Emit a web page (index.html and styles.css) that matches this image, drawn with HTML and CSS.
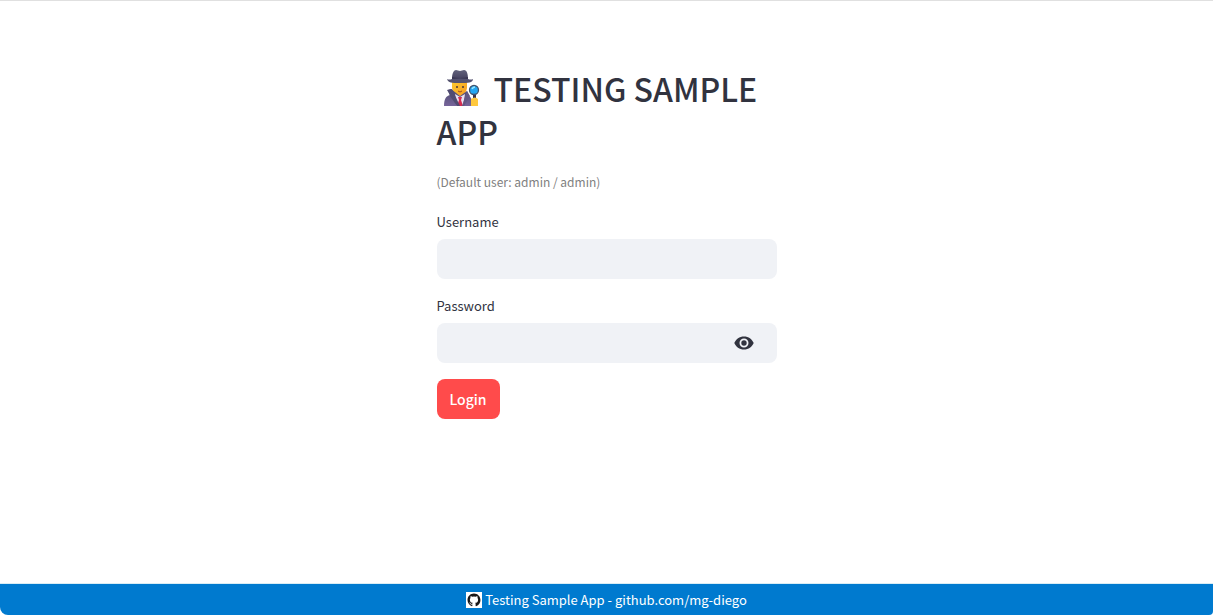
FILE: index.html
```
<!DOCTYPE html>
<html lang="en">
<head>
<meta charset="utf-8">
<meta name="viewport" content="width=device-width, initial-scale=1">
<title>Testing Sample App</title>
<link rel="stylesheet" href="styles.css">
</head>
<body>
<main class="content">
  <form class="login">
    <h1 class="title"><svg class="detective" viewBox="0 0 36 38" aria-hidden="true">
      <defs>
        <linearGradient id="face" x1="0" y1="0" x2="1" y2="1"><stop offset="0" stop-color="#ffce2e"/><stop offset="1" stop-color="#f59a22"/></linearGradient>
        <linearGradient id="coat" x1="0" y1="0" x2="0" y2="1"><stop offset="0" stop-color="#4c4a6d"/><stop offset="1" stop-color="#77659b"/></linearGradient>
        <linearGradient id="hat" x1="0" y1="0" x2="0" y2="1"><stop offset="0" stop-color="#62627c"/><stop offset="1" stop-color="#45415f"/></linearGradient>
      </defs>
      <path d="M8 10h15v9q-1 7-7 8-7-1-8-8z" fill="url(#face)"/>
      <path d="M0 37c0-7 2-10 6-11l-3-5 4-1 9 7 7-5 2 5c3 2 3 5 3 10z" fill="url(#coat)"/>
      <path d="M11 25l5 3 5-3-2 12h-6z" fill="#e9e0f0"/>
      <path d="M14 28h4l-1 3 2 6h-6l2-6z" fill="#d52c50"/>
      <path d="M4 21l4-1 8 17h-3L6 27z" fill="#514c72"/>
      <path d="M23 22l3 5-6 10h-2z" fill="#635783"/>
      <path d="M8 10c0-6 2-9 4-9l4 1 4-1c3 0 4 4 4 9z" fill="url(#hat)"/>
      <path d="M8 8q8 2 16 0v3H8z" fill="#393653"/>
      <path d="M3 10q2 1 5 0 8-1 16 0 3 1 5 0c0 4-5 4-13 4S4 14 3 10z" fill="#555370"/>
      <circle cx="13" cy="18" r="1" fill="#493437"/><circle cx="19" cy="18" r="1" fill="#493437"/>
      <path d="M14 22q2 2 4 0" fill="none" stroke="#a34b21"/>
      <path d="M29 25h3v6h-3z" fill="#383047"/>
      <path d="M27 30q4-3 7 0v7h-7z" fill="#ffc83d"/>
      <circle cx="30" cy="21" r="4.500" fill="#24a6f2" stroke="#40536d" stroke-width="1.300"/>
      <path d="M28 20q1-2 3-2" fill="none" stroke="#96e7ff" stroke-width="1.500"/>
    </svg>TESTING SAMPLE APP</h1>
    <p class="caption">(Default user: admin / admin)</p>
    <div class="field">
      <label class="label" for="username">Username</label>
      <input class="input" id="username" type="text" autocomplete="username">
    </div>
    <div class="field">
      <label class="label" for="password">Password</label>
      <div class="password">
        <input class="secret" id="password" type="password" autocomplete="current-password">
        <button class="reveal" type="button" aria-label="Show password">
          <svg class="eye" viewBox="0 0 20 14" aria-hidden="true"><path fill="#31333f" fill-rule="evenodd" d="M10 .5C5.500.5 1.800 3.200.3 7c1.500 3.800 5.200 6.500 9.700 6.500s8.200-2.700 9.700-6.500C18.200 3.200 14.500.5 10 .5zm0 11A4.500 4.500 0 1 1 10 2.500a4.500 4.500 0 0 1 0 9zm0-7.200a2.700 2.700 0 1 0 0 5.400 2.700 2.700 0 0 0 0-5.400z"/></svg>
        </button>
      </div>
    </div>
    <button class="submit" type="submit">Login</button>
  </form>
</main>
<footer class="footer">
  <svg class="github" viewBox="0 0 16 16" aria-hidden="true"><path fill="#fff" d="M0 0h16v16H0z"/><path transform="translate(1.500 1.500) scale(.81)" fill="#191717" d="M8 0C3.580 0 0 3.580 0 8c0 3.540 2.290 6.530 5.470 7.590.4.070.55-.17.55-.38 0-.19-.01-.82-.01-1.490-2.010.37-2.530-.49-2.690-.94-.09-.23-.48-.94-.82-1.130-.28-.15-.68-.52-.01-.53.63-.01 1.080.58 1.230.82.72 1.210 1.870.87 2.330.66.07-.52.28-.87.51-1.070-1.780-.2-3.640-.89-3.640-3.950 0-.87.31-1.590.82-2.150-.08-.2-.36-1.020.08-2.120 0 0 .67-.21 2.200.82a7.600 7.600 0 0 1 4 0c1.530-1.040 2.200-.82 2.200-.82.44 1.100.16 1.920.08 2.120.51.56.82 1.270.82 2.150 0 3.070-1.870 3.750-3.650 3.950.29.25.54.73.54 1.480 0 1.070-.01 1.930-.01 2.200 0 .21.15.46.55.38A8 8 0 0 0 16 8c0-4.420-3.580-8-8-8z"/></svg>
  <span>Testing Sample App - github.com/mg-diego</span>
</footer>
</body>
</html>
```
FILE: styles.css
```
* { box-sizing: border-box; }
body {
  display: flex;
  flex-direction: column;
  min-height: 100vh;
  margin: 0;
  border-top: 1px solid #e0e0e0;
  background: #fff;
  color: #31333f;
  font-family: "Noto Sans CJK JP", "Noto Sans", sans-serif;
  font-size: 13px;
  line-height: 20px;
}
.content {
  flex: 1;
  padding: 66px 16px 32px;
}
.login {
  display: flex;
  flex-direction: column;
  gap: 16px;
  max-width: 340px;
  margin: 0 auto;
}
.title {
  margin: 0;
  font-size: 32px;
  font-weight: 500;
  line-height: 43px;
}
.detective {
  width: 36px;
  height: 38px;
  margin: 0 14px 0 7px;
  vertical-align: -5px;
}
.caption {
  margin: 0;
  padding: 3px 0;
  color: #808080;
  font-size: 12px;
}
.field {
  display: flex;
  flex-direction: column;
  gap: 6px;
}
.label {
  line-height: 22px;
}
.input,
.password {
  width: 100%;
  height: 40px;
  border: 0;
  border-radius: 8px;
  background: #f0f2f6;
}
.input,
.secret {
  padding: 0 12px;
  color: inherit;
  font: inherit;
}
.password {
  display: flex;
  padding-right: 12px;
}
.secret {
  flex: 1;
  min-width: 0;
  border: 0;
  background: transparent;
}
.reveal {
  display: flex;
  align-items: center;
  padding: 0 11px;
  border: 0;
  background: transparent;
}
.eye {
  width: 20px;
  height: 14px;
}
.submit {
  align-self: flex-start;
  height: 40px;
  padding: 0 13px;
  border: 0;
  border-radius: 8px;
  background: #ff4b4b;
  color: #fff;
  font: inherit;
  font-size: 14px;
  font-weight: 500;
}
.footer {
  display: flex;
  align-items: center;
  justify-content: center;
  gap: 3px;
  height: 32px;
  border-top: 1px solid #d8edf5;
  border-radius: 0 0 4px 8px;
  background: #007acf;
  background-clip: padding-box;
  color: #fff;
}
.github {
  width: 16px;
  height: 16px;
}
```
